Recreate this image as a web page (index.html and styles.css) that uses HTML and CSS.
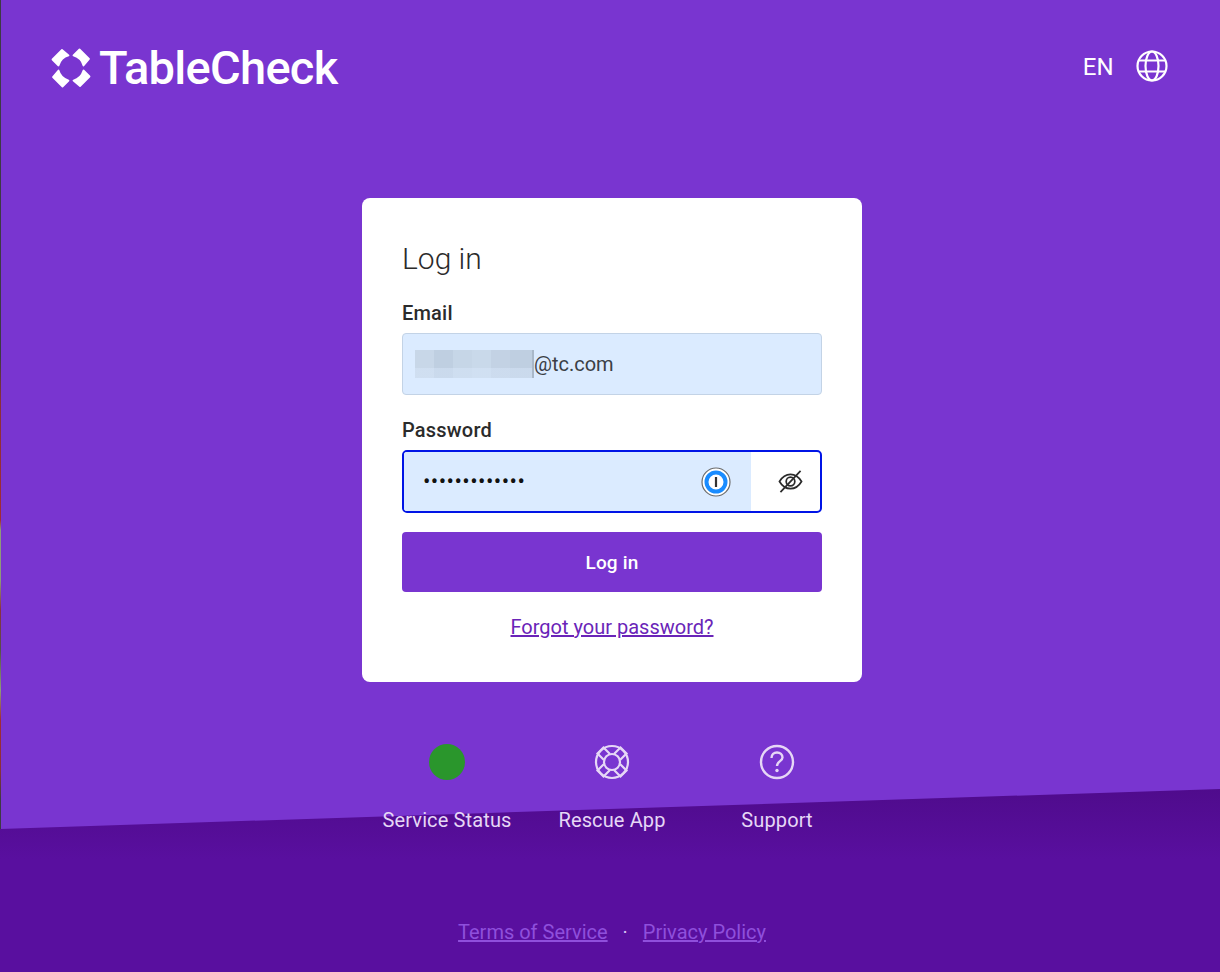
FILE: index.html
```html
<!DOCTYPE html>
<html lang="en">
<head>
    <meta charset="UTF-8">
    <meta name="viewport" content="width=device-width, initial-scale=1.0">
    <title>TableCheck - Log in</title>
    <link rel="stylesheet" href="styles.css">
</head>
<body>
    <div class="edge"></div>
    <div class="slope"></div>

    <header class="top-bar">
        <a class="logo" href="#">
            <svg class="logo-mark" viewBox="0 0 40 40" fill="#fff" stroke="#fff" stroke-width="1.8" stroke-linejoin="round">
                <path d="M1.5 11.5 L11 2 L17.5 7.5 Q10 9.5 7.5 17.5 Z"/>
                <path d="M1.5 11.5 L11 2 L17.5 7.5 Q10 9.5 7.5 17.5 Z" transform="rotate(90 20 20)"/>
                <path d="M1.5 11.5 L11 2 L17.5 7.5 Q10 9.5 7.5 17.5 Z" transform="rotate(180 20 20)"/>
                <path d="M1.5 11.5 L11 2 L17.5 7.5 Q10 9.5 7.5 17.5 Z" transform="rotate(270 20 20)"/>
            </svg>
            <span class="logo-text">TableCheck</span>
        </a>
        <div class="lang">
            <span class="lang-code">EN</span>
            <svg class="globe" viewBox="0 0 32 32" fill="none" stroke="#fff" stroke-width="2.2">
                <circle cx="16" cy="16" r="14.5"/>
                <ellipse cx="16" cy="16" rx="6.5" ry="14.5"/>
                <path d="M3 10.5 H29 M3 21.5 H29"/>
            </svg>
        </div>
    </header>

    <main class="card">
        <h1>Log in</h1>
        <label class="field-label">Email</label>
        <div class="input email-input">
            <span class="blur"></span><span>@tc.com</span>
        </div>
        <label class="field-label password-label">Password</label>
        <div class="input password-input">
            <div class="password-fill">
                <span class="dots">•••••••••••••</span>
                <svg class="onepass" viewBox="0 0 30 30">
                    <circle cx="15" cy="15" r="14" fill="#fff" stroke="#6b6b6b" stroke-width="1.2"/>
                    <circle cx="15" cy="15" r="9.5" fill="#fff" stroke="#1a8cff" stroke-width="4"/>
                    <rect x="13.9" y="10" width="2.2" height="10" fill="#333"/>
                </svg>
            </div>
            <div class="eye-box">
                <svg class="eye" viewBox="0 0 26 24" fill="none" stroke="#2b2b2b" stroke-width="1.8">
                    <path d="M1.5 12 C5 6 9 4.5 13 4.5 C17 4.5 21 6 24.5 12 C21 18 17 19.5 13 19.5 C9 19.5 5 18 1.5 12 Z"/>
                    <circle cx="13" cy="12" r="4.5"/>
                    <path d="M2.5 23 L23.5 1"/>
                </svg>
            </div>
        </div>
        <button class="login-btn">Log in</button>
        <a class="forgot" href="#">Forgot your password?</a>
    </main>

    <nav class="links">
        <a class="link-item" href="#">
            <span class="status-dot"></span>
            <span>Service Status</span>
        </a>
        <a class="link-item" href="#">
            <svg class="link-icon" viewBox="0 0 36 36" fill="none" stroke="#e6d7f6" stroke-width="2.2" stroke-linecap="round">
                <circle cx="18" cy="18" r="16"/>
                <circle cx="18" cy="18" r="8"/>
                <path d="M15.5 9.5 L9.5 3.5 L3.5 9.5 L9.5 15.5"/>
                <path d="M15.5 9.5 L9.5 3.5 L3.5 9.5 L9.5 15.5" transform="rotate(90 18 18)"/>
                <path d="M15.5 9.5 L9.5 3.5 L3.5 9.5 L9.5 15.5" transform="rotate(180 18 18)"/>
                <path d="M15.5 9.5 L9.5 3.5 L3.5 9.5 L9.5 15.5" transform="rotate(270 18 18)"/>
            </svg>
            <span>Rescue App</span>
        </a>
        <a class="link-item" href="#">
            <svg class="link-icon" viewBox="0 0 36 36" fill="none" stroke="#e6d7f6" stroke-width="2.4">
                <circle cx="18" cy="18" r="16"/>
                <path d="M12.5 14 C12.5 10.5 15 8.5 18 8.5 C21.2 8.5 23.5 10.8 23.5 13.5 C23.5 17 18 17.5 18 22"/>
                <circle cx="18" cy="26.5" r="1.7" fill="#e6d7f6" stroke="none"/>
            </svg>
            <span>Support</span>
        </a>
    </nav>

    <footer class="legal">
        <a href="#">Terms of Service</a>
        <span class="sep">·</span>
        <a href="#">Privacy Policy</a>
    </footer>
</body>
</html>
```

FILE: styles.css
```css
* {
    box-sizing: border-box;
}

body {
    position: relative;
    margin: 0;
    padding-left: 4px;
    height: 972px;
    overflow: hidden;
    background-color: #7935d0;
    color: #2b2b2b;
    font-family: "Roboto", "Liberation Sans", sans-serif;
    display: flex;
    flex-direction: column;
    align-items: center;
}

a {
    color: inherit;
}

/* 1px strip of whatever window was behind */
.edge {
    position: absolute;
    left: 0;
    top: 0;
    bottom: 0;
    width: 1px;
    background: linear-gradient(to bottom, #3d3a44 0, #3d3a44 355px, #8a2f3a 400px, #a12b36 520px, #8e9a7a 530px, #8e9a7a 580px, #8a3040 610px, #55504a 650px, #8e9a7a 690px, #a12b36 720px, #8a2f3a 770px, #3d3a44 800px, #3d3a44 100%);
}

.slope {
    position: absolute;
    left: 0;
    right: 0;
    bottom: 0;
    height: 183px;
    background: linear-gradient(to bottom, #4f0b8c 0, #590f9f 70px);
    clip-path: polygon(0 40px, 100% 0, 100% 100%, 0 100%);
}

.top-bar {
    position: relative;
    width: 100%;
    height: 198px;
    padding: 46px 52px 0 47px;
    display: flex;
    justify-content: space-between;
    align-items: flex-start;
}

.logo {
    display: flex;
    align-items: center;
    gap: 8px;
    color: #fff;
    text-decoration: none;
    height: 44px;
}

.logo-mark {
    width: 40px;
    height: 40px;
}

.logo-text {
    font-size: 47px;
    font-weight: 500;
    line-height: 44px;
    letter-spacing: -0.7px;
}

.lang {
    display: flex;
    align-items: center;
    gap: 22px;
    color: #fff;
    font-size: 24px;
    height: 40px;
}

.lang-code {
    margin-top: 2px;
    letter-spacing: 0.3px;
}

.globe {
    width: 32px;
    height: 32px;
}

.card {
    position: relative;
    width: 500px;
    height: 484px;
    padding: 40px;
    background-color: #fff;
    border-radius: 8px;
    display: flex;
    flex-direction: column;
}

.card h1 {
    margin: 0;
    font-size: 30px;
    font-weight: 300;
    line-height: 42px;
}

.field-label {
    display: block;
    flex-shrink: 0;
    margin-top: 20px;
    font-size: 20px;
    font-weight: 500;
    letter-spacing: 0.2px;
    line-height: 26px;
    height: 33px;
}

.password-label {
    margin-top: 22px;
}

.input {
    flex-shrink: 0;
    height: 62px;
    border-radius: 4px;
    font-size: 20px;
    display: flex;
    align-items: center;
}

.email-input {
    padding-left: 12px;
    background-color: #dbebff;
    border: 1px solid #c3d3e6;
    color: #3b3f46;
}

.blur {
    display: block;
    width: 119px;
    height: 28px;
    background:
        linear-gradient(to right, transparent 117px, #a9b8c9 117px),
        linear-gradient(to bottom, transparent 18px, rgba(219, 234, 254, 0.4) 18px),
        linear-gradient(to right, #c8d7e8 0, #c8d7e8 19px, #bfcfe1 19px, #bfcfe1 38px, #c6d6e7 38px, #c6d6e7 57px, #c9d9ea 57px, #c9d9ea 76px, #c3d2e4 76px, #c3d2e4 95px, #bfcfe1 95px);
}

.password-input {
    height: 63px;
    border: 2px solid #0014e6;
    border-radius: 5px;
    background-color: #fff;
    overflow: hidden;
}

.password-fill {
    flex: 1;
    height: 100%;
    padding: 0 20px 0 19px;
    background-color: #dbebff;
    display: flex;
    align-items: center;
    justify-content: space-between;
}

.dots {
    color: #111;
    font-size: 22px;
    letter-spacing: 0.45px;
}

.onepass {
    width: 30px;
    height: 30px;
}

.eye-box {
    width: 69px;
    height: 100%;
    padding-left: 10px;
    display: flex;
    align-items: center;
    justify-content: center;
}

.eye {
    width: 25px;
    height: 23px;
}

.login-btn {
    flex-shrink: 0;
    margin-top: 19px;
    height: 60px;
    border: 0;
    border-radius: 4px;
    background-color: #7935d0;
    color: #fff;
    font-family: inherit;
    font-size: 19px;
    font-weight: 500;
    letter-spacing: 0.2px;
}

.forgot {
    margin-top: 22px;
    text-align: center;
    color: #6a24b8;
    font-size: 20px;
    line-height: 26px;
}

.links {
    position: relative;
    margin-top: 62px;
    display: flex;
    justify-content: center;
}

.link-item {
    width: 165px;
    display: flex;
    flex-direction: column;
    align-items: center;
    gap: 27px;
    color: #e6d7f6;
    font-size: 20px;
    letter-spacing: 0.13px;
    line-height: 26px;
    text-decoration: none;
    white-space: nowrap;
}

.status-dot {
    width: 36px;
    height: 36px;
    border-radius: 50%;
    background-color: #2a962c;
}

.link-icon {
    width: 36px;
    height: 36px;
}

.legal {
    position: relative;
    margin-top: 86px;
    display: flex;
    justify-content: center;
    gap: 15px;
    color: #8f4fdc;
    font-size: 20px;
    line-height: 26px;
}

.sep {
    color: #d9c6f2;
}
```
